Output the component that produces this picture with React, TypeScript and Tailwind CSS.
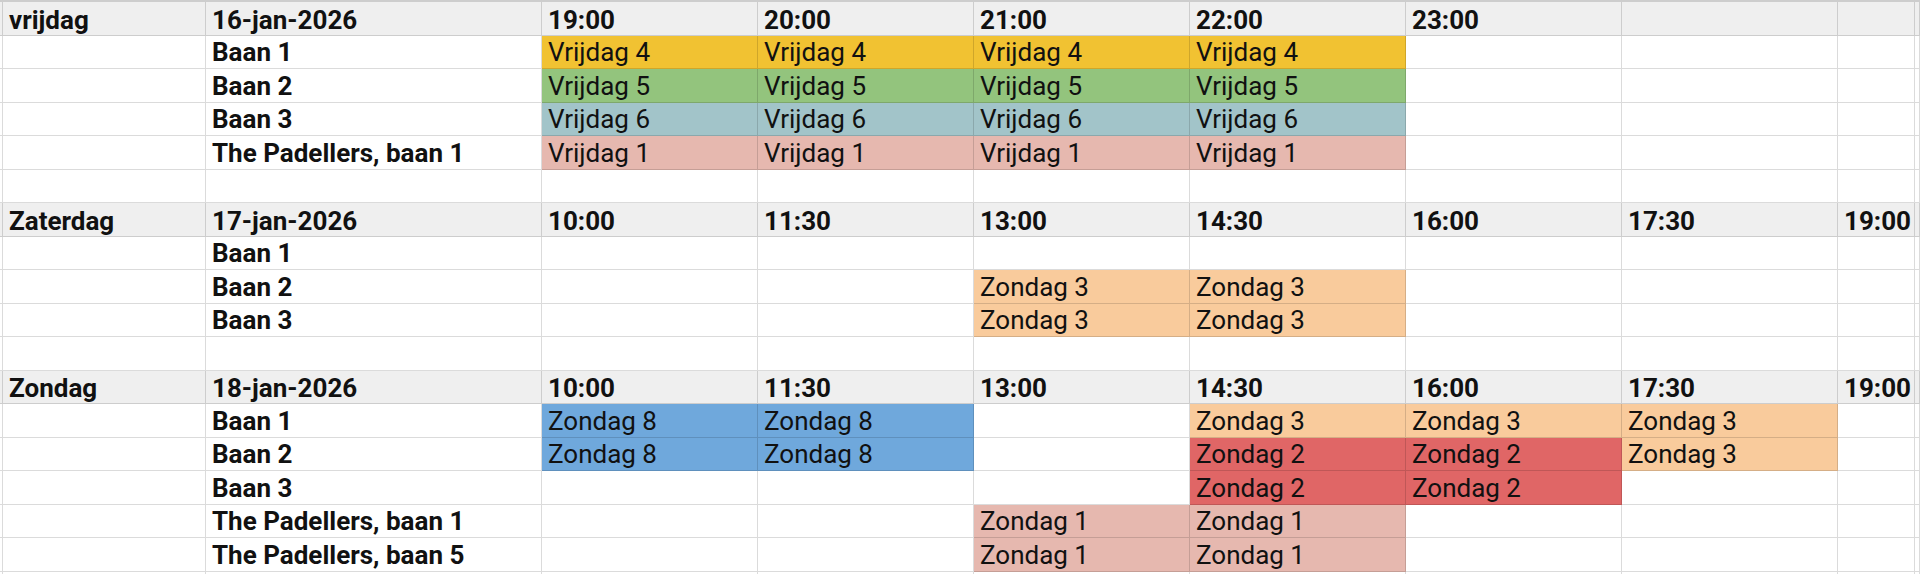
import React from "react";

type Color = "y" | "g" | "c" | "p" | "o" | "b" | "r";

const fill: Record<Color, string> = {
  y: "bg-[#f1c232]",
  g: "bg-[#93c47d]",
  c: "bg-[#a2c4c9]",
  p: "bg-[#e6b8af]",
  o: "bg-[#f9cb9c]",
  b: "bg-[#6fa8dc]",
  r: "bg-[#e06666]",
};

type Slot = null | { t: string; c: Color };

type Row =
  | { kind: "header"; day: string; date: string; times: string[] }
  | { kind: "court"; name: string; slots: Slot[] }
  | { kind: "empty" };

const s = (t: string, c: Color): Slot => ({ t, c });

const rows: Row[] = [
  { kind: "header", day: "vrijdag", date: "16-jan-2026", times: ["19:00", "20:00", "21:00", "22:00", "23:00", "", ""] },
  { kind: "court", name: "Baan 1", slots: [s("Vrijdag 4", "y"), s("Vrijdag 4", "y"), s("Vrijdag 4", "y"), s("Vrijdag 4", "y"), null, null, null] },
  { kind: "court", name: "Baan 2", slots: [s("Vrijdag 5", "g"), s("Vrijdag 5", "g"), s("Vrijdag 5", "g"), s("Vrijdag 5", "g"), null, null, null] },
  { kind: "court", name: "Baan 3", slots: [s("Vrijdag 6", "c"), s("Vrijdag 6", "c"), s("Vrijdag 6", "c"), s("Vrijdag 6", "c"), null, null, null] },
  { kind: "court", name: "The Padellers, baan 1", slots: [s("Vrijdag 1", "p"), s("Vrijdag 1", "p"), s("Vrijdag 1", "p"), s("Vrijdag 1", "p"), null, null, null] },
  { kind: "empty" },
  { kind: "header", day: "Zaterdag", date: "17-jan-2026", times: ["10:00", "11:30", "13:00", "14:30", "16:00", "17:30", "19:00"] },
  { kind: "court", name: "Baan 1", slots: [null, null, null, null, null, null, null] },
  { kind: "court", name: "Baan 2", slots: [null, null, s("Zondag 3", "o"), s("Zondag 3", "o"), null, null, null] },
  { kind: "court", name: "Baan 3", slots: [null, null, s("Zondag 3", "o"), s("Zondag 3", "o"), null, null, null] },
  { kind: "empty" },
  { kind: "header", day: "Zondag", date: "18-jan-2026", times: ["10:00", "11:30", "13:00", "14:30", "16:00", "17:30", "19:00"] },
  { kind: "court", name: "Baan 1", slots: [s("Zondag 8", "b"), s("Zondag 8", "b"), null, s("Zondag 3", "o"), s("Zondag 3", "o"), s("Zondag 3", "o"), null] },
  { kind: "court", name: "Baan 2", slots: [s("Zondag 8", "b"), s("Zondag 8", "b"), null, s("Zondag 2", "r"), s("Zondag 2", "r"), s("Zondag 3", "o"), null] },
  { kind: "court", name: "Baan 3", slots: [null, null, null, s("Zondag 2", "r"), s("Zondag 2", "r"), null, null] },
  { kind: "court", name: "The Padellers, baan 1", slots: [null, null, s("Zondag 1", "p"), s("Zondag 1", "p"), null, null, null] },
  { kind: "court", name: "The Padellers, baan 5", slots: [null, null, s("Zondag 1", "p"), s("Zondag 1", "p"), null, null, null] },
];

const base =
  "h-[33.5px] border-r border-b border-[rgba(0,0,0,0.14)] flex items-center overflow-hidden whitespace-nowrap";

function Cell({ children, className = "" }: { children?: React.ReactNode; className?: string }) {
  return <div className={`${base} ${className}`}>{children}</div>;
}

export default function App() {
  const cells: React.ReactNode[] = [];
  rows.forEach((row, i) => {
    if (row.kind === "header") {
      const h = "bg-[#efefef] font-bold text-[26px] pt-[3px] pl-[6px]";
      cells.push(<Cell key={`${i}-s`} className="bg-[#efefef]" />);
      cells.push(<Cell key={`${i}-d`} className={`${h} pl-[5px]`}>{row.day}</Cell>);
      cells.push(<Cell key={`${i}-t`} className={h}>{row.date}</Cell>);
      row.times.forEach((t, j) => cells.push(<Cell key={`${i}-${j}`} className={h}>{t}</Cell>));
      cells.push(<Cell key={`${i}-e`} className="bg-[#efefef]" />);
    } else if (row.kind === "court") {
      cells.push(<Cell key={`${i}-s`} />);
      cells.push(<Cell key={`${i}-d`} />);
      cells.push(<Cell key={`${i}-t`} className="font-bold text-[26px] pl-[6px] pt-[1px]">{row.name}</Cell>);
      row.slots.forEach((sl, j) =>
        cells.push(
          <Cell key={`${i}-${j}`} className={`pl-[6px] pt-[1px] text-[26px] ${sl ? fill[sl.c] : ""}`}>
            {sl ? sl.t : null}
          </Cell>
        )
      );
      cells.push(<Cell key={`${i}-e`} />);
    } else {
      for (let j = 0; j < 11; j++) cells.push(<Cell key={`${i}-${j}`} />);
    }
  });
  for (let j = 0; j < 11; j++) cells.push(<Cell key={`last-${j}`} />);

  return (
    <div className="w-[1920px] h-[574px] overflow-hidden bg-white text-[#111] font-['Roboto',sans-serif] text-[21px] leading-none">
      <div className="h-[2px] bg-[#cdcdcd]" />
      <div className="grid grid-cols-[3px_203px_336px_216px_216px_216px_216px_216px_216px_77px_1fr]">
        {cells}
      </div>
    </div>
  );
}
